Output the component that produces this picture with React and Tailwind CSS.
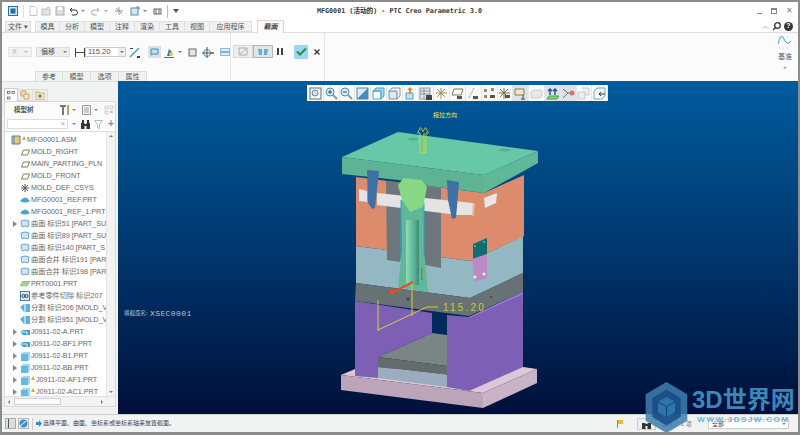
import React from 'react';

const CJK = '"Liberation Sans", "Noto Sans CJK SC", sans-serif';

const TABS = [
  { t: '模具', w: 'w-[25px]' }, { t: '分析', w: 'w-[25px]' }, { t: '模型', w: 'w-[25px]' }, { t: '注释', w: 'w-[25px]' },
  { t: '渲染', w: 'w-[25px]' }, { t: '工具', w: 'w-[25px]' }, { t: '视图', w: 'w-[25px]' }, { t: '应用程序', w: 'w-[42px]' },
];

// tree rows, icon type + label + optional expander / warning flag
const TREE = [
  { icon: 'asm', label: 'MFG0001.ASM', flag: true, top: true },
  { icon: 'plane', label: 'MOLD_RIGHT' },
  { icon: 'plane', label: 'MAIN_PARTING_PLN' },
  { icon: 'plane', label: 'MOLD_FRONT' },
  { icon: 'csys', label: 'MOLD_DEF_CSYS' },
  { icon: 'ref', label: 'MFG0001_REF.PRT' },
  { icon: 'ref', label: 'MFG0001_REF_1.PRT' },
  { icon: 'surf', label: '曲面 标识51 [PART_SU', arrow: true },
  { icon: 'surf', label: '曲面 标识89 [PART_SU' },
  { icon: 'surf', label: '曲面 标识140 [PART_S' },
  { icon: 'surf', label: '曲面合并 标识191 [PAR' },
  { icon: 'surf', label: '曲面合并 标识198 [PAR' },
  { icon: 'prt', label: 'PRT0001.PRT' },
  { icon: 'cut', label: '参考零件切除 标识207' },
  { icon: 'split', label: '分割 标识206 [MOLD_V' },
  { icon: 'split', label: '分割 标识951 [MOLD_V' },
  { icon: 'flat', label: 'J0911-02-A.PRT', arrow: true },
  { icon: 'flat', label: 'J0911-02-BF1.PRT', arrow: true },
  { icon: 'box', label: 'J0911-02-B1.PRT', arrow: true },
  { icon: 'box', label: 'J0911-02-BB.PRT', arrow: true },
  { icon: 'box', label: 'J0911-02-AF1.PRT', arrow: true, flag: true },
  { icon: 'box', label: 'J0911-02-AC1.PRT', arrow: true, flag: true },
];

function TreeIcon({ type }) {
  if (type === 'plane') return <svg width="9" height="9" viewBox="0 0 9 9"><path d="M2.500 2h6L6.500 7h-6z" fill="none" stroke="#8a7a55" /></svg>;
  if (type === 'csys') return <svg width="10" height="10" viewBox="0 0 10 10" stroke="#555" strokeWidth="1"><path d="M5 1v8M1 5h8M2 2l6 6M8 2L2 8" /></svg>;
  if (type === 'ref') return <svg width="10" height="8" viewBox="0 0 10 8"><path d="M0 5q5-7 10 0q-5 3-10 0z" fill="#4aa3d8" /></svg>;
  if (type === 'surf') return <svg width="10" height="10" viewBox="0 0 10 10"><path d="M1 2q4-2 8 0l-1 6q-3-2-6 0z" fill="#cfe6f5" stroke="#6aa8cf" /></svg>;
  if (type === 'prt') return <svg width="11" height="7" viewBox="0 0 11 7"><path d="M3 0h8L8 5H0z" fill="#a8d48f" stroke="#6e9a60" strokeWidth="0.6" /></svg>;
  if (type === 'cut') return <svg width="10" height="10" viewBox="0 0 10 10"><rect x="0.5" y="0.5" width="9" height="9" fill="#dbe9f4" stroke="#4b7fae" /><circle cx="3.500" cy="5" r="1.500" fill="none" stroke="#245" /><circle cx="6.500" cy="5" r="1.500" fill="none" stroke="#245" /></svg>;
  if (type === 'split') return <svg width="10" height="10" viewBox="0 0 10 10"><path d="M0 4l4-3h6v8H4z" fill="#5fb0de" /><path d="M5 1v8" stroke="#fff" /></svg>;
  if (type === 'flat') return <svg width="10" height="8" viewBox="0 0 10 8"><path d="M0 4l3-2h7v5H3z" fill="#3e9fd8" /><path d="M0 4h7v3" fill="none" stroke="#d6eefa" /></svg>;
  if (type === 'box') return <svg width="9" height="9" viewBox="0 0 9 9"><path d="M0 2h7v7H0z" fill="#63b9e4" /><path d="M0 2l2-2h7v7L7 9V2z" fill="#9fd6f0" /></svg>;
  return <svg width="10" height="10" viewBox="0 0 10 10"><path d="M1 1h8v8H1z" fill="#f0c66a" stroke="#4a85b5" /><path d="M3 1v8" stroke="#4a85b5" /></svg>;
}

function Flag() {
  return <span className="mr-[1px] -mt-[3px] h-0 w-0 border-x-[2px] border-b-[4px] border-x-transparent border-b-[#e6b400]" />;
}

function TreeRow({ row }) {
  return (
    <div className={`flex h-[12px] items-center whitespace-nowrap ${row.top ? 'pl-[6px]' : 'pl-[15px]'}`}>
      {row.arrow && (
        <span className="-ml-[7px] mr-[3px] h-0 w-0 border-y-[3px] border-l-[4px] border-y-transparent border-l-[#888]" />
      )}
      <span className="flex w-[10px] shrink-0 items-center justify-center"><TreeIcon type={row.icon} /></span>
      <span className="ml-[1px] flex items-center">
        {row.flag && <Flag />}
        <span>{row.label}</span>
      </span>
    </div>
  );
}

// small toolbar glyphs in the graphics toolbar
function ViewIcon({ kind }) {
  const s = { fill: 'none', stroke: '#5f6f7c', strokeWidth: 1 };
  if (kind === 'zoomBox') return <svg width="13" height="13" viewBox="0 0 13 13"><rect x="1" y="1" width="11" height="11" {...s} /><circle cx="6" cy="6" r="3" fill="#cfe3f2" stroke="#6a8aa0" /></svg>;
  if (kind === 'zoomIn' || kind === 'zoomOut') return (
    <svg width="13" height="13" viewBox="0 0 13 13"><circle cx="5" cy="5" r="4" fill="#d5ecf6" stroke="#4b8fb0" /><path d="M3 5h4" stroke="#27506a" />{kind === 'zoomIn' && <path d="M5 3v4" stroke="#27506a" />}<path d="M8 8l4 4" stroke="#8b98a3" strokeWidth="2" /></svg>
  );
  if (kind === 'refit') return <svg width="13" height="13" viewBox="0 0 13 13"><rect x="1" y="1" width="11" height="11" fill="#dcecf6" stroke="#66808f" /><path d="M1 12L12 1v11z" fill="#3f8fc0" /></svg>;
  if (kind === 'cube') return <svg width="13" height="13" viewBox="0 0 13 13"><path d="M1 4h8v8H1z" fill="#fff" stroke="#4aa0cf" /><path d="M1 4l3-3h8v8l-3 3V4z" fill="#a5d4ec" stroke="#4aa0cf" /></svg>;
  if (kind === 'cube2') return <svg width="13" height="13" viewBox="0 0 13 13"><path d="M1 4h8v8H1z" fill="#dfe8ee" stroke="#7c95a5" /><path d="M1 4l3-3h8v8l-3 3V4z" fill="#f3f6f8" stroke="#7c95a5" /></svg>;
  if (kind === 'cubeUp') return <svg width="13" height="13" viewBox="0 0 13 13"><path d="M2 6h7v6H2z" fill="#bfe2f5" stroke="#4aa0cf" /><path d="M6 0l3 3H7v4H5V3H3z" fill="#e08a3a" /></svg>;
  if (kind === 'table') return <svg width="13" height="13" viewBox="0 0 13 13"><rect x="1" y="1" width="10" height="11" fill="#e6e9ec" stroke="#8b9299" /><path d="M1 4h10M1 7h10M5 1v11" stroke="#8b9299" /><rect x="7" y="8" width="6" height="5" fill="#444" /></svg>;
  if (kind === 'csys') return <svg width="13" height="13" viewBox="0 0 13 13" stroke="#a5895c"><path d="M6 1v11M1 6h11M2 2l8 8M10 2l-8 8" /></svg>;
  if (kind === 'plane') return <svg width="13" height="13" viewBox="0 0 13 13"><path d="M3 2h9l-2 6H1z" fill="none" stroke="#8a7a55" /><rect x="6" y="9" width="5" height="3" fill="#555" /></svg>;
  if (kind === 'axis') return <svg width="13" height="13" viewBox="0 0 13 13"><path d="M2 11L7 1" stroke="#a5895c" strokeDasharray="2 1" /><rect x="6" y="9" width="5" height="3" fill="#555" /></svg>;
  if (kind === 'points') return <svg width="13" height="13" viewBox="0 0 13 13" fill="#a5895c"><path d="M1 2h3v3H1zM8 1h3v3H8zM1 8h3v3H1z" /><rect x="7" y="8" width="5" height="3" fill="#555" /></svg>;
  if (kind === 'csysAll') return <svg width="13" height="13" viewBox="0 0 13 13" stroke="#7a6a4a"><path d="M6 1v11M1 6h11M2 2l8 8M10 2l-8 8" /><rect x="7" y="8" width="5" height="3" fill="#555" stroke="none" /></svg>;
  if (kind === 'rect') return <svg width="13" height="13" viewBox="0 0 13 13"><path d="M1 2h9v6H1z" fill="#f3e7c8" stroke="#8a7a55" /><path d="M9 8v4M7 12h4" stroke="#444" /></svg>;
  if (kind === 'faded') return <svg width="13" height="13" viewBox="0 0 13 13"><path d="M1 5l3-2h8v6l-2 2H1z" fill="#e6e8ea" stroke="#c9cdd0" /></svg>;
  if (kind === 'pull') return <svg width="13" height="13" viewBox="0 0 13 13"><path d="M1 12l2-3h10l-2 3z" fill="#8ed07a" stroke="#4e9a45" /><path d="M4 8V2M2 4l2-2 2 2M9 8V2M7 4l2-2 2 2" fill="none" stroke="#1d5d9a" strokeWidth="1.500" /></svg>;
  if (kind === 'branch') return <svg width="13" height="13" viewBox="0 0 13 13" fill="none"><path d="M1 2l5 4-5 5M6 6h4" stroke="#3b8f8a" /><circle cx="10" cy="6" r="2.500" fill="#e0706a" /></svg>;
  if (kind === 'faded2') return <svg width="13" height="13" viewBox="0 0 13 13"><path d="M1 5h7v7H1zM5 1h7v7H8" fill="#eceeef" stroke="#c4c8cb" /></svg>;
  return <svg width="13" height="13" viewBox="0 0 13 13"><path d="M1 4h8v8H1z" fill="#fff" stroke="#7aa2ba" /><path d="M1 4l3-3h8v8l-3 3" fill="#eef4f8" stroke="#7aa2ba" /><path d="M12 7H6M8 5L6 7l2 2" stroke="#333" fill="none" /></svg>;
}

const VIEW_TOOLS = [
  { k: 'zoomBox' }, { k: 'zoomIn' }, { k: 'zoomOut' }, { k: 'refit' }, { k: 'cube' }, { k: 'cube2' },
  { k: 'cubeUp' }, { k: 'table' }, { k: 'csys' }, { k: 'plane' }, { k: 'axis' }, { k: 'points' }, { k: 'csysAll' },
  { k: 'rect', on: true }, { k: 'faded' }, { k: 'pull', on: true }, { k: 'branch', on: true }, { k: 'faded2' }, { k: 'last' },
];

function Model() {
  return (
    <svg className="absolute inset-0" width="679" height="333" viewBox="118 81 679 333">
      <defs>
        <linearGradient id="cyl" x1="0" x2="1" y1="0" y2="0">
          <stop offset="0" stopColor="#8fdcb6" />
          <stop offset="0.6" stopColor="#5fb296" />
          <stop offset="1" stopColor="#3c8a78" />
        </linearGradient>
      </defs>
      {/* base plate */}
      <polygon points="341,375 355,369 523,367 537,369 483,393" fill="#dcc7d8" />
      <polygon points="341,375 483,393 483,408 341,390" fill="#bda5b9" />
      <polygon points="483,393 537,369 537,383 483,408" fill="#c9b3c6" />
      {/* hole and inner plates */}
      <polygon points="432,313 447,315 447,335 432,333" fill="#032a5c" />
      <polygon points="378,357 432,333 447,335 447,366" fill="#7b8586" />
      <polygon points="378,357 447,366 447,375 378,367" fill="#626c6d" />
      <polygon points="378,367 447,375 447,387 378,378" fill="#9aacbe" />
      {/* purple legs */}
      <polygon points="355,301 432,313 432,333 378,357 378,378 355,376" fill="#7e5fb6" />
      <polygon points="447,315 469,317 523,292 523,367 469,391 447,387" fill="#7e5fb6" />
      <polygon points="469,317 523,292 523,294 469,318" fill="#9a80d6" />
      {/* light blue block */}
      <polygon points="356,246 470,261 523,236 523,273 470,298 356,283" fill="#93b8c4" />
      {/* gray plate */}
      <polygon points="356,283 470,298 523,273 523,292 469,316 355,301" fill="#687173" />
      <circle cx="408" cy="299" r="1.500" fill="#3a4245" />
      <circle cx="491" cy="297" r="1" fill="#3a4245" />
      {/* orange block */}
      <polygon points="356,177 484,193 524,175 524,236 470,261 356,246" fill="#dc8c6c" />
      {/* gray core */}
      <polygon points="386,181 441,188 441,268 425,265 424,255 402,252 400,262 387,260" fill="#6d767c" />
      {/* white slot */}
      <polygon points="359,189 367,191 367,202 359,201" fill="#e4e4e4" />
      <polygon points="377,193 473,203 473,215 458,215 377,205" fill="#e4e4e4" />
      <polygon points="484,198 497,193 496,203 485,208" fill="#e8e8e8" />
      <polygon points="473,203 475,204 474,216 472,216" fill="#f0b090" />
      {/* core pillar */}
      <polygon points="401,200 424,203 424,250 428,292 398,287 402,250" fill="#60b89a" />
      <rect x="406" y="220" width="13" height="65" fill="url(#cyl)" />
      <path d="M401 200v60M424 203v50" stroke="#2aa8c8" strokeWidth="1" fill="none" />
      {/* slider clip */}
      <polygon points="473,244 487,238 487,254 478,258 473,259" fill="#0f6f70" />
      <polygon points="472,259 487,254 487,278 475,282" fill="#bd8ac4" />
      <circle cx="475" cy="246" r="1" fill="#56c0b0" />
      <circle cx="484" cy="242" r="1" fill="#56c0b0" />
      <circle cx="475" cy="277" r="1.500" fill="#eed" />
      <circle cx="484" cy="274" r="1.500" fill="#eed" />
      {/* top plate */}
      <polygon points="398,132 538,151 484,175 342,157" fill="#66c8a6" />
      <polygon points="342,157 484,175 484,193 422,185 398,180 342,174" fill="#5db394" />
      <polygon points="484,175 538,151 538,163 484,193" fill="#60b898" />
      <ellipse cx="413" cy="139" rx="5" ry="1.500" fill="#58ab8c" />
      <ellipse cx="505" cy="150" rx="6" ry="1.500" fill="#58ab8c" />
      {/* wedges and sprue block sit over the plate edge */}
      <polygon points="404,178 422,180 427,187 423,207 410,212 402,200 398,185" fill="#86d884" />
      <polygon points="367,170 379,171 375,208 372,209 368,203" fill="#3e70a4" />
      <polygon points="447,180 459,182 456,218 452,219 448,200" fill="#3e70a4" />
      {/* pull direction arrows */}
      <path d="M420 153v-20h-2.500l3-5.500 2.500 4 2.500-4 3 5.500h-2.500v20z" fill="none" stroke="#d8e020" strokeWidth="0.8" />
      <path d="M424 153v-20" stroke="#d8e020" strokeWidth="0.8" />
      {/* dimension */}
      <path d="M378 300v31M412 283v33M378 330l49-23h11" stroke="#d6cf3a" strokeWidth="1" fill="none" />
      <path d="M378 300l12-9" stroke="#3a8a3a" strokeWidth="1" strokeDasharray="2 2" fill="none" />
      <path d="M393 292l20-10" stroke="#e2501e" strokeWidth="2" />
      <circle cx="392" cy="292" r="2.500" fill="#e2501e" />
      <path d="M418 277h10M422 277v-9" stroke="#30d0c0" strokeWidth="0.8" fill="none" />
      <path d="M422 280v-12" stroke="#e03030" strokeWidth="1" />
      <path d="M423 277v-8" stroke="#40e040" strokeWidth="0.8" />
      <text x="443" y="311" fontSize="10" letterSpacing="2.200" fill="#c9c74a" fontFamily="Liberation Sans, sans-serif">115.20</text>
      <text x="433" y="117" fontSize="6" fill="#e8e833" fontFamily='"Noto Sans CJK SC", sans-serif'>拖拉方向</text>
      <text x="124" y="315" fontSize="5.500" fill="#b5c4d2" fontFamily='"Noto Sans CJK SC", sans-serif'>横截面名:</text>
      <text x="150" y="316" fontSize="8" letterSpacing="0.400" fill="#b5c4d2" fontFamily="Liberation Mono, monospace">XSEC0001</text>
    </svg>
  );
}

function Watermark() {
  return (
    <div className="absolute left-[641px] top-[379px] flex items-start">
      <svg width="47" height="53" viewBox="0 0 48 56">
        <path d="M24 1l22 13v28L24 55 2 42V14z" fill="#3e7fb0" fillOpacity="0.85" />
        <path d="M24 9l15 9v20L24 47 9 38V18z" fill="#14497f" fillOpacity="0.8" />
        <path d="M24 17l9 5v11l-9 5-9-5V22z" fill="#2d76ac" />
        <path d="M15 22l9 5 9-5M24 27v11" stroke="#123d6b" fill="none" />
      </svg>
      <div className="ml-[2px] mt-[6px] flex flex-col items-center">
        <span className="text-[24px] font-bold leading-[26px] text-[#3b87b8]">3D世界网</span>
        <span className="mt-[2px] text-[8px] font-bold leading-[9px] tracking-[1.500px] text-[#66b6e4]">WWW.3DSJW.COM</span>
      </div>
    </div>
  );
}

export default function App() {
  return (
    <div className="relative flex h-[435px] w-[800px] flex-col overflow-hidden border-[3px] border-x-[2px] border-[#8c8c8c] border-t-[2px] bg-[#f2f3f3] text-[#555]" style={{ fontFamily: CJK }}>
      {/* title bar */}
      <div className="flex h-[18px] shrink-0 items-center bg-white pl-[6px] pr-[5px]">
        <svg width="10" height="10" viewBox="0 0 10 10"><rect x="0.5" y="0.5" width="9" height="9" fill="#cfe4f2" stroke="#2f6f9f" /><rect x="2.500" y="2.500" width="5" height="5" fill="#1f6ea8" /></svg>
        <span className="mx-[5px] h-[13px] w-px bg-[#ddd]" />
        <div className="flex items-center gap-[3px] text-[#aaa]">
          <svg width="9" height="10" viewBox="0 0 9 10"><path d="M1 .5h5l2 2v7H1z" fill="#fff" stroke="#c4c4c4" /></svg>
          <svg width="11" height="10" viewBox="0 0 11 10"><path d="M1 3h8v6H1z" fill="#e4e4e4" stroke="#bbb" /><path d="M5 3l2-2 2 1" fill="none" stroke="#bbb" /></svg>
          <svg width="10" height="10" viewBox="0 0 10 10"><rect x="1" y="1" width="8" height="8" fill="#ddd" stroke="#aaa" /><rect x="3" y="1" width="4" height="3" fill="#fff" /></svg>
          <svg width="10" height="9" viewBox="0 0 10 9"><path d="M2 3h5a2.500 2.500 0 0 1 0 5H4M2 3l2-2M2 3l2 2" fill="none" stroke="#333" /></svg>
          <span className="h-0 w-0 border-x-[2px] border-t-[2px] border-x-transparent border-t-[#888]" />
          <svg className="ml-[3px]" width="10" height="9" viewBox="0 0 10 9"><path d="M8 3H3a2.500 2.500 0 0 0 0 5h3M8 3L6 1M8 3L6 5" fill="none" stroke="#aaa" /></svg>
          <span className="h-0 w-0 border-x-[2px] border-t-[2px] border-x-transparent border-t-[#aaa]" />
          <svg className="ml-[3px]" width="10" height="10" viewBox="0 0 10 10" stroke="#999" fill="none"><path d="M1 5h8M5 1v8M2 2l6 6" /></svg>
          <svg className="ml-[3px]" width="10" height="10" viewBox="0 0 10 10"><rect x="1" y="2" width="7" height="7" fill="#d6e8f3" stroke="#5a8aa8" /><path d="M6 1h3v3" fill="none" stroke="#5a8aa8" /></svg>
          <span className="h-0 w-0 border-x-[2px] border-t-[2px] border-x-transparent border-t-[#777]" />
          <svg className="ml-[3px]" width="9" height="9" viewBox="0 0 9 9"><rect x="1" y="2" width="7" height="5" fill="none" stroke="#666" /><path d="M3 2v5M6 2v5" stroke="#666" /></svg>
        </div>
        <span className="mx-[5px] h-[13px] w-px bg-[#bbb]" />
        <span className="h-0 w-0 border-x-[3px] border-t-[4px] border-x-transparent border-t-[#555]" />
        <div className="flex-1 pl-[138px] text-[6.700px] font-bold text-[#333]" style={{ fontFamily: '"DejaVu Sans Mono", "Noto Sans CJK SC", monospace' }}>
          MFG0001 (活动的) - PTC Creo Parametric 3.0
        </div>
        <div className="flex items-center gap-[9px] text-[#777]">
          <span className="mt-[5px] h-[1px] w-[5px] bg-[#888]" />
          <span className="h-[6px] w-[6px] border border-t-[2px] border-[#888]" />
          <span className="text-[8px] leading-none">✕</span>
        </div>
      </div>

      {/* tab strip */}
      <div className="flex h-[12px] shrink-0 items-end bg-white pl-[3px] pr-[5px] text-[7px] leading-[10px]">
        <div className="flex h-[11px] w-[26px] items-center justify-center border border-[#dcdcdc] bg-[#eef0f0]">文件 ▾</div>
        <div className="ml-[4px] flex h-[11px]">
          {TABS.map(t => (
            <div key={t.t} className={`flex items-center justify-center border border-l-0 border-[#e1e1e1] bg-[#f0f1f1] first:border-l ${t.w}`}>{t.t}</div>
          ))}
        </div>
        <div className="relative z-10 ml-[5px] -mb-px flex h-[13px] w-[27px] items-center justify-center border border-b-0 border-[#d8d8d8] bg-[#fbfbfb] font-bold italic text-[#444]">截面</div>
        <div className="flex-1" />
        <div className="mb-[1px] flex items-center gap-[3px]">
          <span className="text-[7px] text-[#bbb]">︽</span>
          <svg width="9" height="9" viewBox="0 0 9 9" fill="none" stroke="#333" strokeWidth="1.300"><circle cx="5.500" cy="3.500" r="2.800" /><path d="M3.500 5.500L1 8" /></svg>
          <span className="flex h-[9px] w-[9px] items-center justify-center rounded-full bg-[#333] text-[7px] font-bold text-white">?</span>
        </div>
      </div>

      {/* ribbon */}
      <div className="relative flex h-[49px] shrink-0 border-t border-[#dedede] bg-[#fbfbfb]">
        <div className="w-[228px] pl-[6px]">
          <div className="mt-[13px] flex h-[12px] items-center">
            <div className="flex h-[10px] w-[24px] items-center justify-between border border-[#e4e4e4] bg-[#f2f2f2] px-[3px] text-[7px] text-[#aaa]"><span>X</span><span className="h-0 w-0 border-x-[2px] border-t-[2px] border-x-transparent border-t-[#bbb]" /></div>
            <div className="ml-[4px] flex h-[10px] w-[34px] items-center justify-between border border-[#ddd] bg-[#eee] pl-[4px] pr-[2px] text-[7px]"><span>偏移</span><span className="h-0 w-0 border-x-[2px] border-t-[2px] border-x-transparent border-t-[#777]" /></div>
            <svg className="ml-[5px]" width="10" height="9" viewBox="0 0 10 9" stroke="#444"><path d="M.5 0v9M9.500 0v9M0 4.500h10" /></svg>
            <div className="flex h-[10px] w-[41px] items-center border border-[#ccc] bg-white text-[7.500px]">
              <span className="flex-1 pl-[2px] leading-none">115.20</span>
              <span className="flex h-full w-[7px] items-center justify-center bg-[#eee]"><span className="h-0 w-0 border-x-[2px] border-t-[2px] border-x-transparent border-t-[#777]" /></span>
            </div>
            <svg className="ml-[3px]" width="11" height="11" viewBox="0 0 11 11"><path d="M1 10L10 1" stroke="#4a9dcc" strokeWidth="1.500" /><path d="M1 1h3v1H1zM8 9h3v2H8z" fill="#444" /></svg>
            <span className="ml-[8px] flex h-[12px] w-[13px] items-center justify-center bg-[#dfe2e4]">
              <svg width="9" height="8" viewBox="0 0 9 8"><path d="M1 1h7v5H3L1 7z" fill="#bfe0f2" stroke="#3f8fbf" /></svg>
            </span>
            <svg className="ml-[3px]" width="11" height="11" viewBox="0 0 11 11"><path d="M0 10h10v1H0z" fill="#4a6a8a" /><path d="M3 9l2-7 3 3-1 4z" fill="#3a73a8" /><circle cx="7" cy="7" r="2" fill="#e8c24a" /></svg>
            <span className="ml-[3px] h-0 w-0 border-x-[2px] border-t-[2px] border-x-transparent border-t-[#777]" />
            <svg className="ml-[6px]" width="9" height="9" viewBox="0 0 9 9"><rect x="1" y="1" width="7" height="7" fill="#e2e4e6" stroke="#666" /></svg>
            <svg className="ml-[5px]" width="12" height="12" viewBox="0 0 12 12" fill="none"><circle cx="5" cy="7" r="3.500" stroke="#3f8fbf" /><path d="M5 1v11M0 7h10" stroke="#555" /><path d="M9 7h3" stroke="#c33" strokeWidth="1.500" /></svg>
            <svg className="ml-[6px]" width="10" height="8" viewBox="0 0 10 8"><rect x="0.5" y="0.5" width="9" height="7" fill="#d9ecf7" stroke="#8fb9d4" /><rect x="1" y="3" width="8" height="2" fill="#7fb3d6" /></svg>
          </div>
        </div>
        <div className="flex w-[94px] border-l border-[#e3e3e3] pl-[1px]">
          <div className="mt-[12px] flex h-[13px] items-center">
            <span className="ml-[1px] flex h-[13px] w-[20px] items-center justify-center border border-[#d8d8d8] bg-[#eeeeee]">
              <svg width="10" height="9" viewBox="0 0 10 9" fill="none" stroke="#aaa"><path d="M1 1h8v7H1zM2 7l6-5" /></svg>
            </span>
            <span className="flex h-[13px] w-[20px] items-center justify-center border border-[#b5b5b5] bg-[#e4e4e4]">
              <svg width="10" height="8" viewBox="0 0 10 8"><path d="M0 1h4v6H1zM6 1h4L9 7H6z" fill="#62b0de" /></svg>
            </span>
            <span className="ml-[4px] flex gap-[2px]"><span className="h-[7px] w-[2px] bg-[#444]" /><span className="h-[7px] w-[2px] bg-[#444]" /></span>
            <span className="ml-[11px] flex h-[14px] w-[14px] items-center justify-center rounded-[1px] bg-[#9ed5f2]">
              <svg width="11" height="9" viewBox="0 0 11 9" fill="none"><path d="M1 4.500l3 3 6-6" stroke="#2f8f3f" strokeWidth="2" /></svg>
            </span>
            <svg className="ml-[6px]" width="6" height="6" viewBox="0 0 6 6" stroke="#333" strokeWidth="1.300"><path d="M.5.500l5 5M5.500.500l-5 5" /></svg>
          </div>
        </div>
        <div className="flex-1 border-l border-[#e3e3e3]" />
        <div className="flex w-[26px] flex-col items-center pt-[3px] text-[7px] leading-[9px]">
          <svg width="14" height="13" viewBox="0 0 14 13" fill="none"><path d="M0 8q3-12 6-5t7 2" stroke="#43a5dc" strokeWidth="1" /><path d="M1 1h12M1 12h12" stroke="#bbb" strokeDasharray="1 3" /></svg>
          <span className="mt-[3px]">基准</span>
          <span className="mt-[6px] h-0 w-0 border-x-[2px] border-t-[2px] border-x-transparent border-t-[#999]" />
        </div>
        {/* dialog tabs hang off the ribbon bottom */}
        <div className="absolute bottom-0 left-[33px] flex h-[10px] text-[7px] leading-none">
          {['参考', '模型', '选项', '属性'].map(t => (
            <span key={t} className="flex w-[28px] items-center justify-center border border-b-0 border-l-0 border-[#dcdcdc] bg-[#f0f1f1] first:border-l">{t}</span>
          ))}
        </div>
      </div>

      <div className="flex min-h-0 flex-1">
        {/* model tree panel */}
        <div className="flex w-[116px] shrink-0 flex-col border-t border-[#dedede] bg-[#f1f2f2] pr-[2px] pt-[6px]">
          <div className="flex h-[13px] shrink-0 items-end pl-[2px]">
            <span className="flex h-[13px] w-[14px] items-center justify-center border border-b-0 border-[#ccc] bg-white">
              <svg width="8" height="9" viewBox="0 0 8 9" fill="none" stroke="#666" strokeWidth="0.800"><rect x="0.500" y="0.500" width="2.500" height="2" /><rect x="5" y="0.500" width="2.500" height="2" /><rect x="0.500" y="6" width="2.500" height="2" /></svg>
            </span>
            <span className="flex h-[12px] w-[15px] items-center justify-center border border-l-0 border-[#ddd] bg-[#eceded]">
              <svg width="10" height="10" viewBox="0 0 10 10"><path d="M1 1h5v5H1z" fill="#f4deb0" stroke="#c9a45e" /><path d="M4 4h5v5H4z" fill="#f6e6c0" stroke="#c9a45e" /></svg>
            </span>
            <span className="flex h-[12px] w-[15px] items-center justify-center border border-l-0 border-[#ddd] bg-[#eceded]">
              <svg width="10" height="9" viewBox="0 0 10 9"><path d="M0 1h4l1 1h5v7H0z" fill="#f3dfae" stroke="#b59a60" strokeWidth="0.600" /><circle cx="5" cy="5" r="1.500" fill="#2f7fb8" /></svg>
            </span>
          </div>
          <div className="mb-[7px] ml-[2px] flex min-h-0 flex-1 flex-col border border-[#d8d8d8] bg-white">
            <div className="flex h-[15px] shrink-0 items-center bg-[#fbfbfb] pl-[9px] text-[6.500px] font-bold">
              <span className="w-[46px]">模型树</span>
              <svg width="9" height="10" viewBox="0 0 9 10"><path d="M0 0h6v2H4v8H2V2H0z" fill="#777" /><path d="M7 0h2v10H7z" fill="#c7a258" /></svg>
              <span className="ml-[3px] h-0 w-0 border-x-[2px] border-t-[2px] border-x-transparent border-t-[#888]" />
              <svg className="ml-[6px]" width="9" height="10" viewBox="0 0 9 10" fill="none" stroke="#999"><path d="M.5.500h8v9h-8zM2 3h5M2 5h5M2 7h5" /></svg>
              <span className="ml-[3px] h-0 w-0 border-x-[2px] border-t-[2px] border-x-transparent border-t-[#888]" />
              <svg className="ml-[6px]" width="10" height="10" viewBox="0 0 10 10" fill="none" stroke="#ccc"><path d="M1 1h3v3H1zM6 1h3v3H6zM1 6h3v3H1z" /><path d="M6 7h3" stroke="#888" /></svg>
            </div>
            <div className="flex h-[14px] shrink-0 items-center bg-[#fbfbfb] pl-[2px]">
              <div className="flex h-[10px] w-[61px] items-center justify-end border border-[#ddd] bg-white pr-[2px] text-[7px] text-[#999]">×</div>
              <span className="ml-[4px] h-0 w-0 border-x-[2px] border-t-[2px] border-x-transparent border-t-[#888]" />
              <svg className="ml-[5px]" width="9" height="9" viewBox="0 0 9 9" fill="#333"><rect x="0" y="3" width="3.500" height="6" /><rect x="5.500" y="3" width="3.500" height="6" /><rect x="1" y="0" width="2" height="3" /><rect x="6" y="0" width="2" height="3" /><rect x="3" y="4" width="3" height="2" /></svg>
              <svg className="ml-[4px]" width="9" height="9" viewBox="0 0 9 9" fill="none" stroke="#bbb"><path d="M.5.500h8L5.500 4.500V8.500l-2-1V4.500z" /></svg>
              <span className="ml-[5px] text-[10px] font-bold leading-none text-[#888]">+</span>
            </div>
            <div className="flex min-h-0 flex-1 flex-col border-t border-[#ddd] bg-white">
              <div className="flex min-h-0 flex-1">
                <div className="min-w-0 flex-1 overflow-hidden pt-[2px] text-[7.200px] text-[#666]">
                  {TREE.map(r => <TreeRow key={r.label + r.icon} row={r} />)}
                </div>
                <div className="flex w-[9px] shrink-0 flex-col items-center justify-between border-l border-[#e4e4e4] bg-[#f3f3f3] py-[3px]">
                  <span className="h-0 w-0 border-x-[2px] border-b-[2px] border-x-transparent border-b-[#777]" />
                  <span className="h-0 w-0 border-x-[2px] border-t-[2px] border-x-transparent border-t-[#777]" />
                </div>
              </div>
              <div className="flex h-[10px] shrink-0 items-center border-t border-[#e0e0e0] bg-[#f3f3f3] px-[3px]">
                <span className="h-0 w-0 border-y-[2px] border-r-[2px] border-y-transparent border-r-[#777]" />
                <span className="ml-[4px] h-[7px] w-[47px] border border-[#d0d0d0] bg-[#fafafa]" />
                <span className="flex-1" />
                <span className="mr-[9px] h-0 w-0 border-y-[2px] border-l-[2px] border-y-transparent border-l-[#777]" />
              </div>
            </div>
          </div>
        </div>

        {/* graphics window */}
        <div className="relative min-w-0 flex-1 overflow-hidden bg-gradient-to-b from-[#005c9e] via-[#00386f] to-[#00103a]">
          <Model />
          <div className="absolute left-[189px] top-[4px] flex h-[16px] items-center bg-white pl-[1px]">
            {VIEW_TOOLS.map(t => (
              <span key={t.k} className={`flex h-[16px] w-[15.800px] items-center justify-center border-r border-[#e6e6e6] ${t.on ? 'bg-[#dfe3e6]' : 'bg-[#fafafa]'}`}>
                <ViewIcon kind={t.k} />
              </span>
            ))}
          </div>
        </div>
      </div>

      {/* status bar */}
      <div className="relative flex h-[18px] shrink-0 items-center border-t border-[#cfcfcf] bg-[#f1f2f2] pl-[3px] text-[6px] text-[#444]">
        <span className="flex h-[11px] w-[11px] items-center border border-[#aaa] bg-[#ddd]"><span className="ml-[2px] h-full w-px bg-[#555]" /></span>
        <span className="ml-[2px] flex h-[11px] w-[11px] items-center justify-center border border-[#bbb] bg-[#eee]">
          <svg width="9" height="9" viewBox="0 0 9 9"><circle cx="4.500" cy="4.500" r="4" fill="#3f8fcf" /><path d="M1 7l6-5" stroke="#fff" /></svg>
        </span>
        <span className="mx-[3px] h-[12px] w-px bg-[#ccc]" />
        <svg width="6" height="7" viewBox="0 0 6 7"><path d="M0 2h3V0l3 3.500L3 7V5H0z" fill="#2f8fd0" /></svg>
        <span className="ml-[1px]">选择平面、曲面、坐标系或坐标系轴来放置截面。</span>
        <div className="absolute left-[615px] top-[3px] flex items-center">
          <svg width="6" height="8" viewBox="0 0 6 8"><path d="M0 0h1v8H0z" fill="#888" /><path d="M1 0h5v4H1z" fill="#eeb820" /></svg>
          <span className="ml-[14px] flex h-[12px] w-[19px] items-center justify-center border border-[#ccc] bg-[#eee]">
            <svg width="9" height="9" viewBox="0 0 9 9" fill="#333"><rect x="0" y="3" width="3.500" height="6" /><rect x="5.500" y="3" width="3.500" height="6" /><rect x="3" y="4" width="3" height="2" /></svg>
          </span>
          <span className="ml-[5px] w-[32px] whitespace-nowrap text-[#777]">选择了 1 项</span>
          <span className="ml-[15px] flex h-[10px] w-[81px] items-center justify-between border border-[#ccc] bg-white pl-[3px] pr-[2px]"><span>全部</span><span className="h-0 w-0 border-x-[2px] border-t-[2px] border-x-transparent border-t-[#888]" /></span>
        </div>
      </div>
      <div className="pointer-events-none">
        <Watermark />
      </div>
    </div>
  );
}
